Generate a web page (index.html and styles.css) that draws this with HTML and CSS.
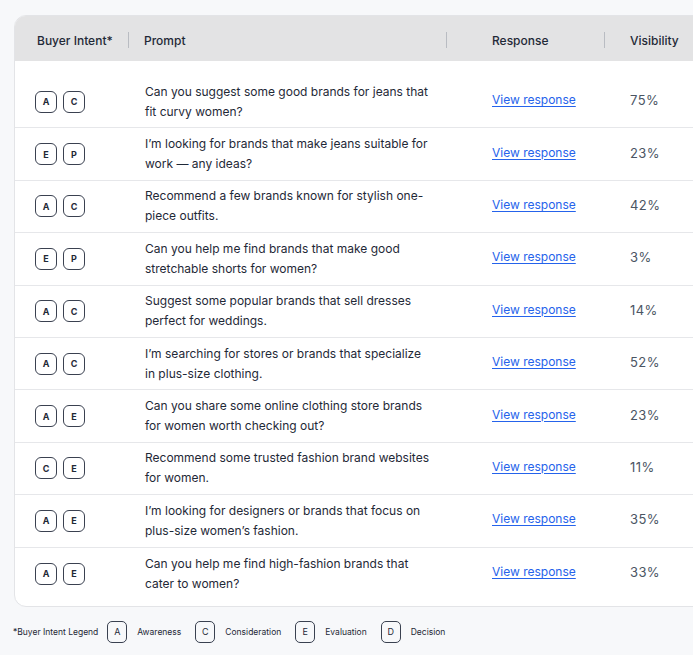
FILE: index.html
```html
<!DOCTYPE html>
<html>
<head>
<meta charset="utf-8">
<link rel="stylesheet" href="styles.css">
</head>
<body>
<div class="page">
  <div class="card">
    <div class="row head">
      <div class="cell c1">Buyer Intent*</div>
      <div class="cell c2"><span class="div"></span>Prompt</div>
      <div class="cell c3"><span class="div"></span>Response</div>
      <div class="cell c4"><span class="div"></span>Visibility</div>
    </div>
    <div class="body">
      <div class="row"><div class="cell c1"><span class="b">A</span><span class="b">C</span></div><div class="cell c2"><p>Can you suggest some good brands for jeans that fit curvy women?</p></div><div class="cell c3"><a href="#">View response</a></div><div class="cell c4 pct">75%</div></div>
      <div class="row"><div class="cell c1"><span class="b">E</span><span class="b">P</span></div><div class="cell c2"><p>I’m looking for brands that make jeans suitable for work — any ideas?</p></div><div class="cell c3"><a href="#">View response</a></div><div class="cell c4 pct">23%</div></div>
      <div class="row"><div class="cell c1"><span class="b">A</span><span class="b">C</span></div><div class="cell c2"><p>Recommend a few brands known for stylish one-piece outfits.</p></div><div class="cell c3"><a href="#">View response</a></div><div class="cell c4 pct">42%</div></div>
      <div class="row"><div class="cell c1"><span class="b">E</span><span class="b">P</span></div><div class="cell c2"><p>Can you help me find brands that make good stretchable shorts for women?</p></div><div class="cell c3"><a href="#">View response</a></div><div class="cell c4 pct">3%</div></div>
      <div class="row"><div class="cell c1"><span class="b">A</span><span class="b">C</span></div><div class="cell c2"><p>Suggest some popular brands that sell dresses perfect for weddings.</p></div><div class="cell c3"><a href="#">View response</a></div><div class="cell c4 pct">14%</div></div>
      <div class="row"><div class="cell c1"><span class="b">A</span><span class="b">C</span></div><div class="cell c2"><p>I’m searching for stores or brands that specialize in plus-size clothing.</p></div><div class="cell c3"><a href="#">View response</a></div><div class="cell c4 pct">52%</div></div>
      <div class="row"><div class="cell c1"><span class="b">A</span><span class="b">E</span></div><div class="cell c2"><p>Can you share some online clothing store brands for women worth checking out?</p></div><div class="cell c3"><a href="#">View response</a></div><div class="cell c4 pct">23%</div></div>
      <div class="row"><div class="cell c1"><span class="b">C</span><span class="b">E</span></div><div class="cell c2"><p>Recommend some trusted fashion brand websites for women.</p></div><div class="cell c3"><a href="#">View response</a></div><div class="cell c4 pct">11%</div></div>
      <div class="row"><div class="cell c1"><span class="b">A</span><span class="b">E</span></div><div class="cell c2"><p>I’m looking for designers or brands that focus on plus-size women’s fashion.</p></div><div class="cell c3"><a href="#">View response</a></div><div class="cell c4 pct">35%</div></div>
      <div class="row last"><div class="cell c1"><span class="b">A</span><span class="b">E</span></div><div class="cell c2"><p>Can you help me find high-fashion brands that cater to women?</p></div><div class="cell c3"><a href="#">View response</a></div><div class="cell c4 pct">33%</div></div>
    </div>
  </div>
  <div class="legend">
    <span class="lt">*Buyer Intent Legend</span>
    <span class="lb">A</span><span class="ll">Awareness</span>
    <span class="lb">C</span><span class="ll">Consideration</span>
    <span class="lb">E</span><span class="ll">Evaluation</span>
    <span class="lb">D</span><span class="ll">Decision</span>
  </div>
</div>
</body>
</html>
```

FILE: styles.css
```css
html, body {
  margin: 0;
  padding: 0;
  background: #f7f8fa;
  overflow: hidden;
}
body {
  font-family: Inter, "Noto Sans", sans-serif;
  color: #1f2937;
}
.page {
  padding: 15px 0 0 14px;
  width: 740px;
}
.card {
  width: 720px;
  background: #fff;
  border: 1px solid #e3e4e7;
  border-radius: 12px;
  overflow: hidden;
  box-sizing: border-box;
}
.row {
  display: grid;
  grid-template-columns: 113px 318px 158px 1fr;
  align-items: center;
}
.head {
  height: 45px;
  background: #e3e3e4;
  font-size: 12px;
  font-weight: 500;
  color: #1f2937;
}
.head .cell {
  display: flex;
  align-items: center;
  padding-top: 3px;
}
.div {
  width: 1px;
  height: 16px;
  background: #b9bcc2;
  margin-right: 15px;
}
.head .c1 { padding-left: 22px; }
.head .c3 .div { margin-right: 45px; }
.head .c4 .div { margin-right: 25px; }
.body {
  padding: 15px 0 6px;
}
.body .row {
  height: 52.4px;
  box-sizing: border-box;
  border-bottom: 1px solid #e6e7ea;
}
.body .row.last { border-bottom: none; }
.body .c1 {
  padding-left: 20px;
  display: flex;
  gap: 6px;
}
.b {
  width: 20px;
  height: 20px;
  border: 1px solid #3a4150;
  border-radius: 6px;
  display: flex;
  align-items: center;
  justify-content: center;
  font-size: 9px;
  font-weight: 700;
  color: #1f2937;
}
.body .c2 { padding-left: 17px; }
.body .c2 p {
  margin: 0;
  font-size: 12px;
  line-height: 20px;
  width: 285px;
  color: #1f2937;
}
.body .c3 {
  padding-left: 46px;
  line-height: 16px;
  padding-bottom: 5px;
}
.body .c3 a {
  color: #2563eb;
  font-size: 12px;
  text-decoration: underline;
  text-underline-offset: 2px;
}
.pct {
  padding-left: 26px;
  font-size: 13px;
  line-height: 16px;
  padding-bottom: 3px;
  color: #4b5563;
  letter-spacing: 0.4px;
}
.legend {
  display: flex;
  align-items: center;
  margin: 14px 0 0 -1px;
  font-size: 8.5px;
  color: #1f2937;
}
.lt { margin-right: 9px; }
.lb {
  width: 18px;
  height: 20px;
  border: 1px solid #3a4150;
  border-radius: 5px;
  display: flex;
  align-items: center;
  justify-content: center;
  font-size: 9px;
  margin-right: 10px;
}
.ll { margin-right: 14px; }
```
